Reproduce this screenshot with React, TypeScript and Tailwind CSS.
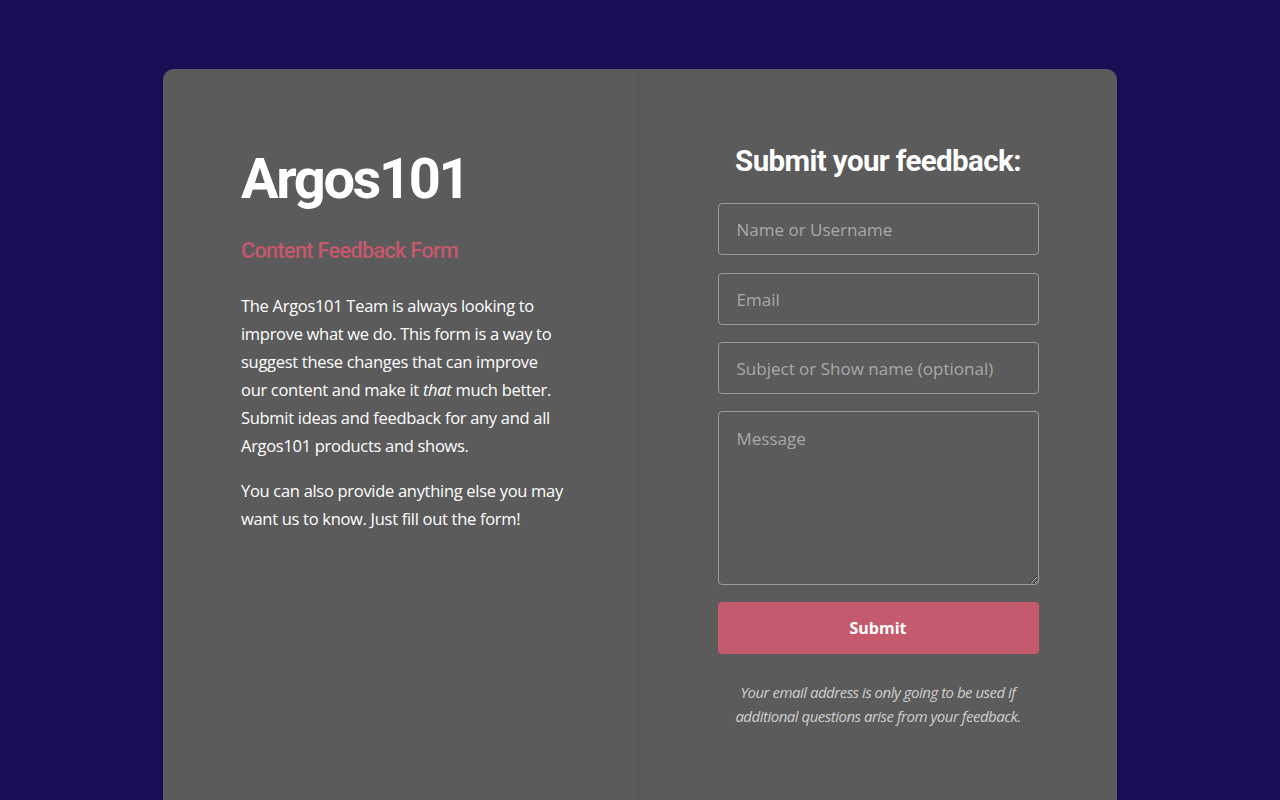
import React from "react";

export default function App() {
  const inputCls =
    "w-full h-[52px] rounded-[4px] border border-[#9b9b9b] bg-transparent px-[18px] text-[17px] text-white placeholder:text-[#a9a9a9] outline-none";
  return (
    <div className="min-h-[800px] h-[800px] overflow-hidden bg-[#1a0e56] pt-[69px]" style={{ fontFamily: '"Open Sans", sans-serif' }}>
      <div className="mx-auto w-[954px] h-[760px] rounded-[11px] bg-[#5a5b5a] grid grid-cols-[476px_1fr]">
        <div className="border-r border-[#525352] pl-[78px] pr-[50px] pt-[76px]">
          <h1
            className="text-[56px] font-bold leading-[68px] text-white tracking-[-2.4px]"
            style={{ fontFamily: "Roboto, sans-serif" }}
          >
            Argos101
          </h1>
          <h2
            className="mt-[23px] text-[21.5px] font-medium leading-[30px] text-[#c6576d] tracking-[-0.6px]"
            style={{ fontFamily: "Roboto, sans-serif" }}
          >
            Content Feedback Form
          </h2>
          <p className="mt-[26px] w-[325px] text-[16.5px] leading-[28px] text-white tracking-[-0.3px]">
            The Argos101 Team is always looking to improve what we do. This form is a way to suggest these changes that can improve our content and make it <em>that</em> much better. Submit ideas and feedback for any and all Argos101 products and shows.
          </p>
          <p className="mt-[17px] w-[325px] text-[16.5px] leading-[28px] text-white tracking-[-0.3px]">
            You can also provide anything else you may want us to know. Just fill out the form!
          </p>
        </div>
        <div className="flex flex-col items-center pt-[72px]">
          <h2
            className="text-[29.5px] font-bold leading-[40px] text-white tracking-[-0.6px]"
            style={{ fontFamily: "Roboto, sans-serif" }}
          >
            Submit your feedback:
          </h2>
          <form className="mt-[22px] flex w-[321px] flex-col gap-[17px]" onSubmit={(e) => e.preventDefault()}>
            <input className={inputCls + " mb-[1px]"} placeholder="Name or Username" />
            <input className={inputCls} placeholder="Email" />
            <input className={inputCls} placeholder="Subject or Show name (optional)" />
            <textarea
              className="w-full h-[174px] rounded-[4px] border border-[#9b9b9b] bg-transparent px-[18px] py-[14px] text-[17px] text-white placeholder:text-[#a9a9a9] outline-none"
              placeholder="Message"
            />
            <button
              type="submit"
              className="h-[52px] w-full rounded-[4px] bg-[#c45a6c] text-[16px] font-bold text-white"
            >
              Submit
            </button>
          </form>
          <p className="mt-[26px] w-[300px] text-center text-[15px] italic leading-[24px] text-[#cfcfcf] tracking-[-0.5px]">
            Your email address is only going to be used if additional questions arise from your feedback.
          </p>
        </div>
      </div>
    </div>
  );
}
